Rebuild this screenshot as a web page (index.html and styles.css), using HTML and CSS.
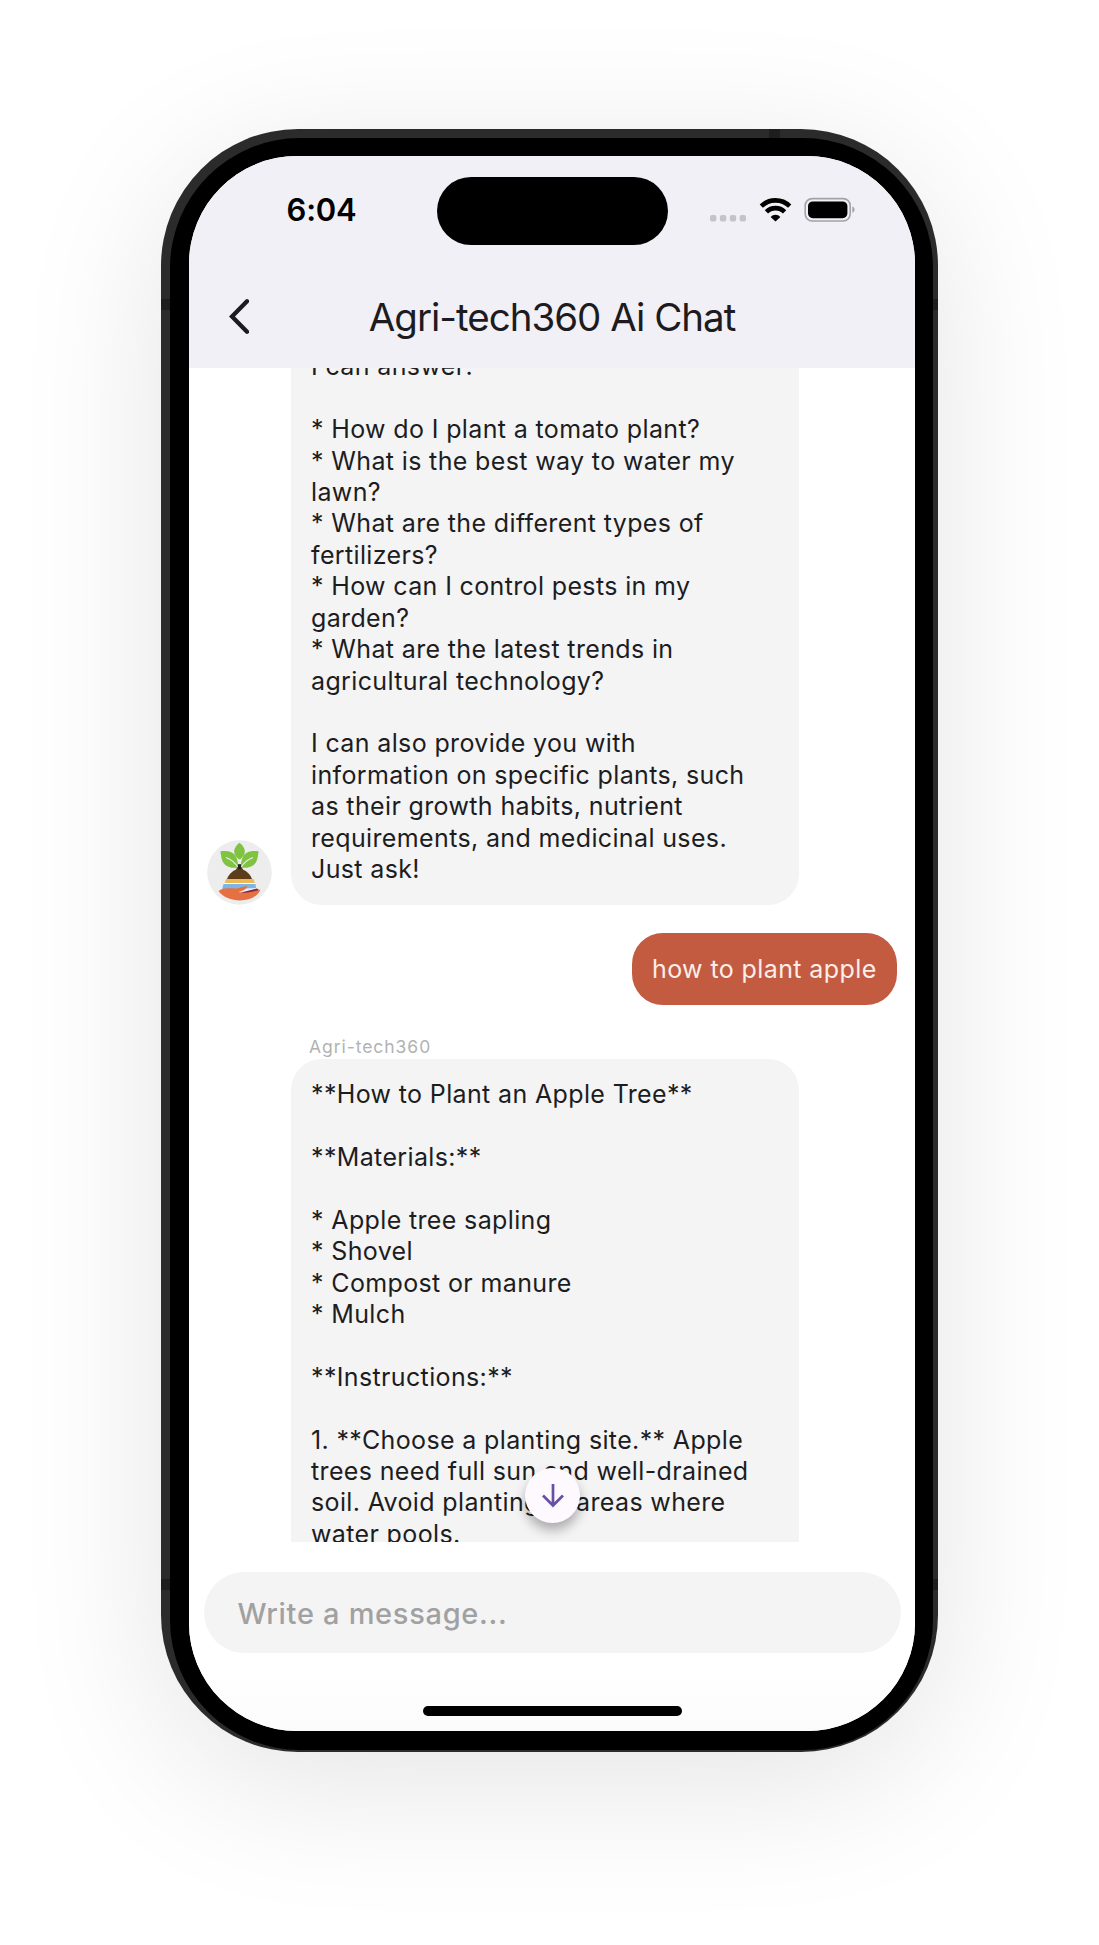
FILE: index.html
```html
<!DOCTYPE html>
<html lang="en">
<head>
<meta charset="utf-8">
<title>Agri-tech360 Ai Chat</title>
<link rel="stylesheet" href="styles.css">
</head>
<body>
<div class="phone">
  <i class="band band-top"></i>
  <i class="band band-left"></i>
  <i class="band band-right"></i>
  <i class="band band-left low"></i>
  <i class="band band-right low"></i>
  <div class="bezel">
    <div class="screen">
      <header class="header">
        <div class="status">
          <span class="time">6:04</span>
          <span class="island"></span>
          <svg class="indicators" width="146" height="26" viewBox="0 0 146 26">
            <g fill="#c4c3c8"><rect x="0" y="18" width="6.4" height="6.4" rx="2"/><rect x="9.9" y="18" width="6.4" height="6.4" rx="2"/><rect x="19.8" y="18" width="6.4" height="6.4" rx="2"/><rect x="29.6" y="18" width="6.4" height="6.4" rx="2"/></g>
            <g fill="none" stroke="#000" stroke-width="4.6"><path d="M51.3 9.2a20.3 20.3 0 0 1 28.4 0"/><path d="M56.4 14.9a12.8 12.8 0 0 1 18.2 0"/></g>
            <path d="M65.5 24.500l-4.900-4.600a6.8 6.8 0 0 1 9.800 0z"/>
            <rect x="95.2" y="1.6" width="45" height="22.4" rx="7" fill="none" stroke="#a3a2a7" stroke-width="1.6"/>
            <rect x="98" y="4.4" width="39.4" height="16.8" rx="4.8"/>
            <path d="M142.3 9.6c3 1 3 5.200 0 6.200z" fill="#a3a2a7"/>
          </svg>
        </div>
        <div class="titlebar">
          <svg class="back" width="20" height="36" viewBox="0 0 20 36"><path d="M18 2.300 3 17.500l15 15.200" fill="none" stroke="#1d1b20" stroke-width="4.300" stroke-linecap="round" stroke-linejoin="miter"/></svg>
          <h1 class="title">Agri-tech360 Ai Chat</h1>
        </div>
      </header>
      <main class="chat">
        <div class="row">
          <svg class="avatar" width="65" height="65" viewBox="0 0 65 65">
            <circle cx="32.500" cy="32.500" r="32.300" fill="#ededee"/>
            <g fill="#7fc341">
              <path d="M32.500 2.800c7 5.500 7 11 .8 16.500h-1.600C25.500 13.800 25.500 8.300 32.500 2.800z"/>
              <path d="M13.300 11.500c5-1 12-.5 15.200 4.200 2.300 3.500 2.300 7.500 3 12-6 .5-12-.2-15.200-5-2.300-3.500-2-7.500-3-11.200z"/>
              <path d="M51.700 11.500c-5-1-12-.5-15.200 4.200-2.300 3.500-2.300 7.500-3 12 6 .5 12-.2 15.200-5 2.300-3.500 2-7.500 3-11.200z"/>
            </g>
            <path d="M19 17.500q8 3 12 10M46 17.500q-8 3-12 10" fill="none" stroke="#ededee" stroke-width="1.100"/>
            <path d="M30.500 27h4l1.500 2.500c4.500 2 7.500 5.200 9 9.500H20c1.500-4.300 4.500-7.500 9-9.500z" fill="#5d3d19"/>
            <path d="M31 24.200h3v5h-3z" fill="#222"/>
            <path d="M19 39h27.500l1.300 4.100H17.700z" fill="#edb956"/>
            <path d="M17 43.100h31.500l.5 1.200H16.200z" fill="#fff"/>
            <path d="M16.500 44h32l.5 4-34 1.500z" fill="#7fb4e6"/>
            <path d="M34 52.500 50 48.500l2 1.500c-3 3-7 4-16 4z" fill="#7c2748"/>
            <path d="M11.500 51c5-3.500 12-2.500 17.500-2.500 4-.2 7-1.900 11.500-2.400-1 3.400-4.500 4.900-9 5.900 8 1.800 15-.5 22-2.500-5.500 14-33 14.500-42 1.500z" fill="#e57042"/>
          </svg>
          <div class="bubble first">I can answer:

* How do I plant a tomato plant?
* What is the best way to water my
lawn?
* What are the different types of
fertilizers?
* How can I control pests in my
garden?
* What are the latest trends in
agricultural technology?

I can also provide you with
information on specific plants, such
as their growth habits, nutrient
requirements, and medicinal uses.
Just ask!</div>
        </div>
        <div class="bubble mine">how to plant apple</div>
        <div class="sender">Agri-tech360</div>
        <div class="bubble reply">**How to Plant an Apple Tree**

**Materials:**

* Apple tree sapling
* Shovel
* Compost or manure
* Mulch

**Instructions:**

1. **Choose a planting site.** Apple
trees need full sun and well-drained
soil. Avoid planting in areas where
water pools.</div>
        <button class="down" aria-label="Scroll down"><svg width="24" height="26" viewBox="0 0 24 26"><path d="M12 1v21M2 12.500l10 10 10-10" fill="none" stroke="#6750a4" stroke-width="2.700"/></svg></button>
      </main>
      <footer class="footer">
        <div class="input">Write a message...</div>
        <span class="home"></span>
      </footer>
    </div>
  </div>
</div>
</body>
</html>
```

FILE: styles.css
```css
* { box-sizing: border-box; }
body { margin: 0; min-height: 1945px; background: #fff; font-family: Inter, "Liberation Sans", sans-serif; overflow: hidden; }
.phone { position: relative; width: 777px; height: 1623px; margin: 129px 0 0 161px; padding: 9px 5px 2px 9px; border-radius: 137px; background: #2b2b2b; box-shadow: 0 30px 150px rgba(0, 0, 0, .11); }
.band { position: absolute; background: #1e1e1e; }
.band-top { left: 608px; top: 0; width: 11px; height: 10px; }
.band-left { left: 0; top: 170px; width: 10px; height: 11px; }
.band-right { right: 0; top: 170px; width: 6px; height: 11px; }
.low { top: 1450px; }
.bezel { position: relative; height: 1612px; padding: 18px 18px 19.500px 19px; border-radius: 130px; background: #000; }
.screen { display: flex; flex-direction: column; height: 100%; border-radius: 108px; overflow: hidden; background: #fff; }
.header { height: 212px; flex: none; background: #f1f0f7; }
.status { display: grid; grid-template-columns: 248px 231px 1fr; align-items: center; padding-top: 20.500px; height: 89px; }
.time { padding-left: 97.500px; margin-top: -1px; font-size: 31px; font-weight: 600; letter-spacing: -.2px; line-height: 38px; }
.island { height: 68.500px; border-radius: 35px; background: #000; }
.indicators { margin: -2px 0 0 42px; }
.titlebar { display: grid; grid-template-columns: 41px 1fr 41px; align-items: center; height: 122px; padding-top: 17px; }
.back { margin-left: 40px; margin-top: 4px; }
.title { margin: 5px 0 0; text-align: center; font-size: 38.500px; font-weight: 400; letter-spacing: -1px; line-height: 48px; color: #1d1b20; white-space: nowrap; }
.chat { position: relative; height: 1174px; flex: none; overflow: hidden; display: flex; flex-direction: column; padding: 0 18px; }
.row { display: flex; align-items: flex-end; gap: 19px; height: 537px; flex: none; }
.avatar { flex: none; }
.bubble { flex: none; white-space: pre; background: #f4f4f4; color: #1d1d1f; font-size: 25px; line-height: 31.420px; letter-spacing: .36px; }
.first { width: 508px; height: 537px; padding: 0 0 19.500px 20px; border-radius: 0 0 31px 31px; display: flex; align-items: flex-end; }
.mine { align-self: flex-end; width: 265px; height: 72px; margin-top: 28px; padding: 21px 0 0 20px; border-radius: 31px; background: #c35b41; color: #fbeee9; letter-spacing: .4px; }
.sender { flex: none; margin: 30px 0 0 102px; height: 24px; font-size: 17.500px; line-height: 23px; letter-spacing: .95px; color: #b2b2b2; }
.reply { width: 508px; height: 500px; margin-left: 84px; padding: 20px 0 0 20px; border-radius: 31px 31px 0 0; }
.down { position: absolute; left: 336px; top: 1100px; width: 55px; height: 55px; padding: 0; border: 0; border-radius: 50%; background: #fef9ff; display: flex; align-items: center; justify-content: center; box-shadow: 0 7px 12px rgba(0, 0, 0, .3); }
.footer { flex: 1; display: flex; flex-direction: column; align-items: center; padding-top: 30px; background: linear-gradient(#fff 70%, #fbfbfb); }
.input { width: 697px; height: 81px; border-radius: 41px; padding: 23px 34px; background: #f4f4f4; color: #a1a1a1; font-size: 29px; line-height: 38px; letter-spacing: .7px; font-weight: 500; }
.home { width: 259px; height: 9.500px; margin-top: 53px; border-radius: 5px; background: #000; }
```
